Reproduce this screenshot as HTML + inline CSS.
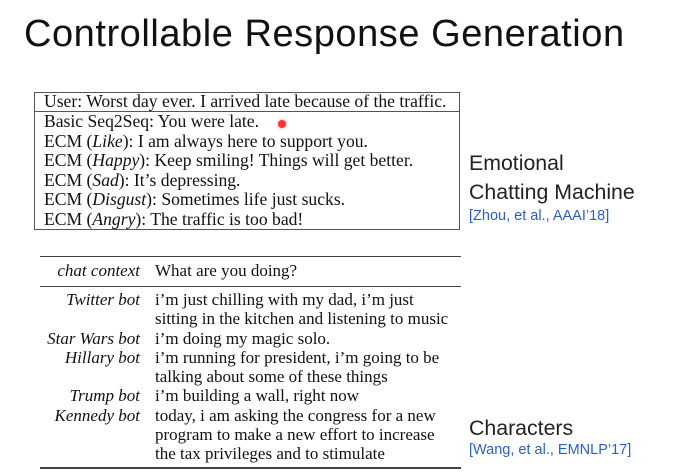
<!DOCTYPE html>
<html><head><style>
body{margin:0;width:679px;height:476px;background:#fff;position:relative;overflow:hidden;font-family:"Liberation Serif",serif;color:#111}
.a{position:absolute;white-space:nowrap}
.t{font-family:"Liberation Sans",sans-serif;font-size:38px;left:24px;top:13px;color:#111;letter-spacing:0.55px}
.s{font-family:"Liberation Sans",sans-serif;font-size:21.3px;color:#222}
.b{font-family:"Liberation Sans",sans-serif;font-size:14.5px;color:#2a5fc4}
.box{position:absolute;left:34px;top:92px;width:426px;height:138px;border:1px solid #555;box-sizing:border-box}
.r{position:absolute;font-size:17.6px;line-height:19.5px;white-space:nowrap}
.dot{position:absolute;left:278px;top:120px;width:8px;height:8px;border-radius:50%;background:#f33;box-shadow:0 0 3px #f88}
.l{position:absolute;left:40px;width:421px;height:1px;background:#444}
.lab{position:absolute;right:539px;font-style:italic;font-size:17px;white-space:nowrap;text-align:right}
.tx{position:absolute;left:155px;font-size:17px;white-space:nowrap}
</style></head><body>
<div class="a t">Controllable Response Generation</div>
<div class="box"></div>
<div style="position:absolute;left:34px;top:111px;width:426px;height:1px;background:#555"></div>
<div class="r" style="left:44px;top:92px">User: Worst day ever. I arrived late because of the traffic.</div>
<div class="r" style="left:44px;top:112px">Basic Seq2Seq: You were late.<br>ECM (<i>Like</i>): I am always here to support you.<br>ECM (<i>Happy</i>): Keep smiling! Things will get better.<br>ECM (<i>Sad</i>): It’s depressing.<br>ECM (<i>Disgust</i>): Sometimes life just sucks.<br>ECM (<i>Angry</i>): The traffic is too bad!</div>
<div class="dot"></div>
<div class="a s" style="left:469px;top:151px">Emotional</div>
<div class="a s" style="left:469px;top:180px">Chatting Machine</div>
<div class="a b" style="left:469px;top:208px">[Zhou, et al., AAAI’18]</div>
<div class="l" style="top:256px"></div>
<div class="l" style="top:286px"></div>
<div class="l" style="top:467px;height:2px"></div>
<div class="lab" style="top:261px">chat context</div>
<div class="tx" style="top:261px">What are you doing?</div>
<div class="lab" style="top:290px;line-height:19.3px">Twitter bot<br><br>Star Wars bot<br>Hillary bot<br><br>Trump bot<br>Kennedy bot</div>
<div class="tx" style="top:290px;line-height:19.3px">i’m just chilling with my dad, i’m just<br>sitting in the kitchen and listening to music<br>i’m doing my magic solo.<br>i’m running for president, i’m going to be<br>talking about some of these things<br>i’m building a wall, right now<br>today, i am asking the congress for a new<br>program to make a new effort to increase<br>the tax privileges and to stimulate</div>
<div class="a s" style="left:469px;top:416px">Characters</div>
<div class="a b" style="left:469px;top:442px">[Wang, et al., EMNLP’17]</div>
</body></html>
